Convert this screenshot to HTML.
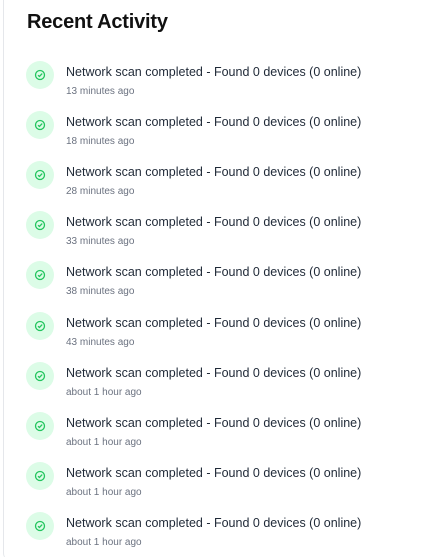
<!DOCTYPE html>
<html><head><style>
html,body{margin:0;width:437px;height:557px;overflow:hidden;}
body{background:#fff;font-family:"Liberation Sans",sans-serif;position:relative;}
.card{position:absolute;left:3px;top:-10px;width:440px;height:570px;border-left:1px solid #e5e7eb;border-top:1px solid #e5e7eb;border-radius:8px;}
h2{position:absolute;left:27px;top:11px;margin:0;font-size:20px;font-weight:600;color:#111;letter-spacing:-0.2px}
.item{position:absolute;left:26px;height:40px;}
.ic{position:absolute;left:0;top:0;width:28px;height:28px;border-radius:50%;background:#dcfce7;}
.ic svg{position:absolute;left:8px;top:8px}
.t{position:absolute;left:40px;top:4px;font-size:12.5px;color:#1f2937;white-space:nowrap}
.s{position:absolute;left:40px;top:25px;font-size:10px;color:#6b7280;white-space:nowrap}
</style></head><body>
<div class="card"></div>
<h2>Recent Activity</h2>
<div class="item" style="top:61px"><div class="ic"><svg width="12" height="12" viewBox="0 0 12 12"><circle cx="6" cy="6" r="4.5" fill="none" stroke="#22c55e" stroke-width="1.3"/><path d="M4 6.2l1.4 1.3L8.2 4.6" fill="none" stroke="#22c55e" stroke-width="1.3"/></svg></div><div class="t">Network scan completed - Found 0 devices (0 online)</div><div class="s">13 minutes ago</div></div>
<div class="item" style="top:111px"><div class="ic"><svg width="12" height="12" viewBox="0 0 12 12"><circle cx="6" cy="6" r="4.5" fill="none" stroke="#22c55e" stroke-width="1.3"/><path d="M4 6.2l1.4 1.3L8.2 4.6" fill="none" stroke="#22c55e" stroke-width="1.3"/></svg></div><div class="t">Network scan completed - Found 0 devices (0 online)</div><div class="s">18 minutes ago</div></div>
<div class="item" style="top:161px"><div class="ic"><svg width="12" height="12" viewBox="0 0 12 12"><circle cx="6" cy="6" r="4.5" fill="none" stroke="#22c55e" stroke-width="1.3"/><path d="M4 6.2l1.4 1.3L8.2 4.6" fill="none" stroke="#22c55e" stroke-width="1.3"/></svg></div><div class="t">Network scan completed - Found 0 devices (0 online)</div><div class="s">28 minutes ago</div></div>
<div class="item" style="top:211px"><div class="ic"><svg width="12" height="12" viewBox="0 0 12 12"><circle cx="6" cy="6" r="4.5" fill="none" stroke="#22c55e" stroke-width="1.3"/><path d="M4 6.2l1.4 1.3L8.2 4.6" fill="none" stroke="#22c55e" stroke-width="1.3"/></svg></div><div class="t">Network scan completed - Found 0 devices (0 online)</div><div class="s">33 minutes ago</div></div>
<div class="item" style="top:261px"><div class="ic"><svg width="12" height="12" viewBox="0 0 12 12"><circle cx="6" cy="6" r="4.5" fill="none" stroke="#22c55e" stroke-width="1.3"/><path d="M4 6.2l1.4 1.3L8.2 4.6" fill="none" stroke="#22c55e" stroke-width="1.3"/></svg></div><div class="t">Network scan completed - Found 0 devices (0 online)</div><div class="s">38 minutes ago</div></div>
<div class="item" style="top:312px"><div class="ic"><svg width="12" height="12" viewBox="0 0 12 12"><circle cx="6" cy="6" r="4.5" fill="none" stroke="#22c55e" stroke-width="1.3"/><path d="M4 6.2l1.4 1.3L8.2 4.6" fill="none" stroke="#22c55e" stroke-width="1.3"/></svg></div><div class="t">Network scan completed - Found 0 devices (0 online)</div><div class="s">43 minutes ago</div></div>
<div class="item" style="top:362px"><div class="ic"><svg width="12" height="12" viewBox="0 0 12 12"><circle cx="6" cy="6" r="4.5" fill="none" stroke="#22c55e" stroke-width="1.3"/><path d="M4 6.2l1.4 1.3L8.2 4.6" fill="none" stroke="#22c55e" stroke-width="1.3"/></svg></div><div class="t">Network scan completed - Found 0 devices (0 online)</div><div class="s">about 1 hour ago</div></div>
<div class="item" style="top:412px"><div class="ic"><svg width="12" height="12" viewBox="0 0 12 12"><circle cx="6" cy="6" r="4.5" fill="none" stroke="#22c55e" stroke-width="1.3"/><path d="M4 6.2l1.4 1.3L8.2 4.6" fill="none" stroke="#22c55e" stroke-width="1.3"/></svg></div><div class="t">Network scan completed - Found 0 devices (0 online)</div><div class="s">about 1 hour ago</div></div>
<div class="item" style="top:462px"><div class="ic"><svg width="12" height="12" viewBox="0 0 12 12"><circle cx="6" cy="6" r="4.5" fill="none" stroke="#22c55e" stroke-width="1.3"/><path d="M4 6.2l1.4 1.3L8.2 4.6" fill="none" stroke="#22c55e" stroke-width="1.3"/></svg></div><div class="t">Network scan completed - Found 0 devices (0 online)</div><div class="s">about 1 hour ago</div></div>
<div class="item" style="top:512px"><div class="ic"><svg width="12" height="12" viewBox="0 0 12 12"><circle cx="6" cy="6" r="4.5" fill="none" stroke="#22c55e" stroke-width="1.3"/><path d="M4 6.2l1.4 1.3L8.2 4.6" fill="none" stroke="#22c55e" stroke-width="1.3"/></svg></div><div class="t">Network scan completed - Found 0 devices (0 online)</div><div class="s">about 1 hour ago</div></div>
</body></html>
